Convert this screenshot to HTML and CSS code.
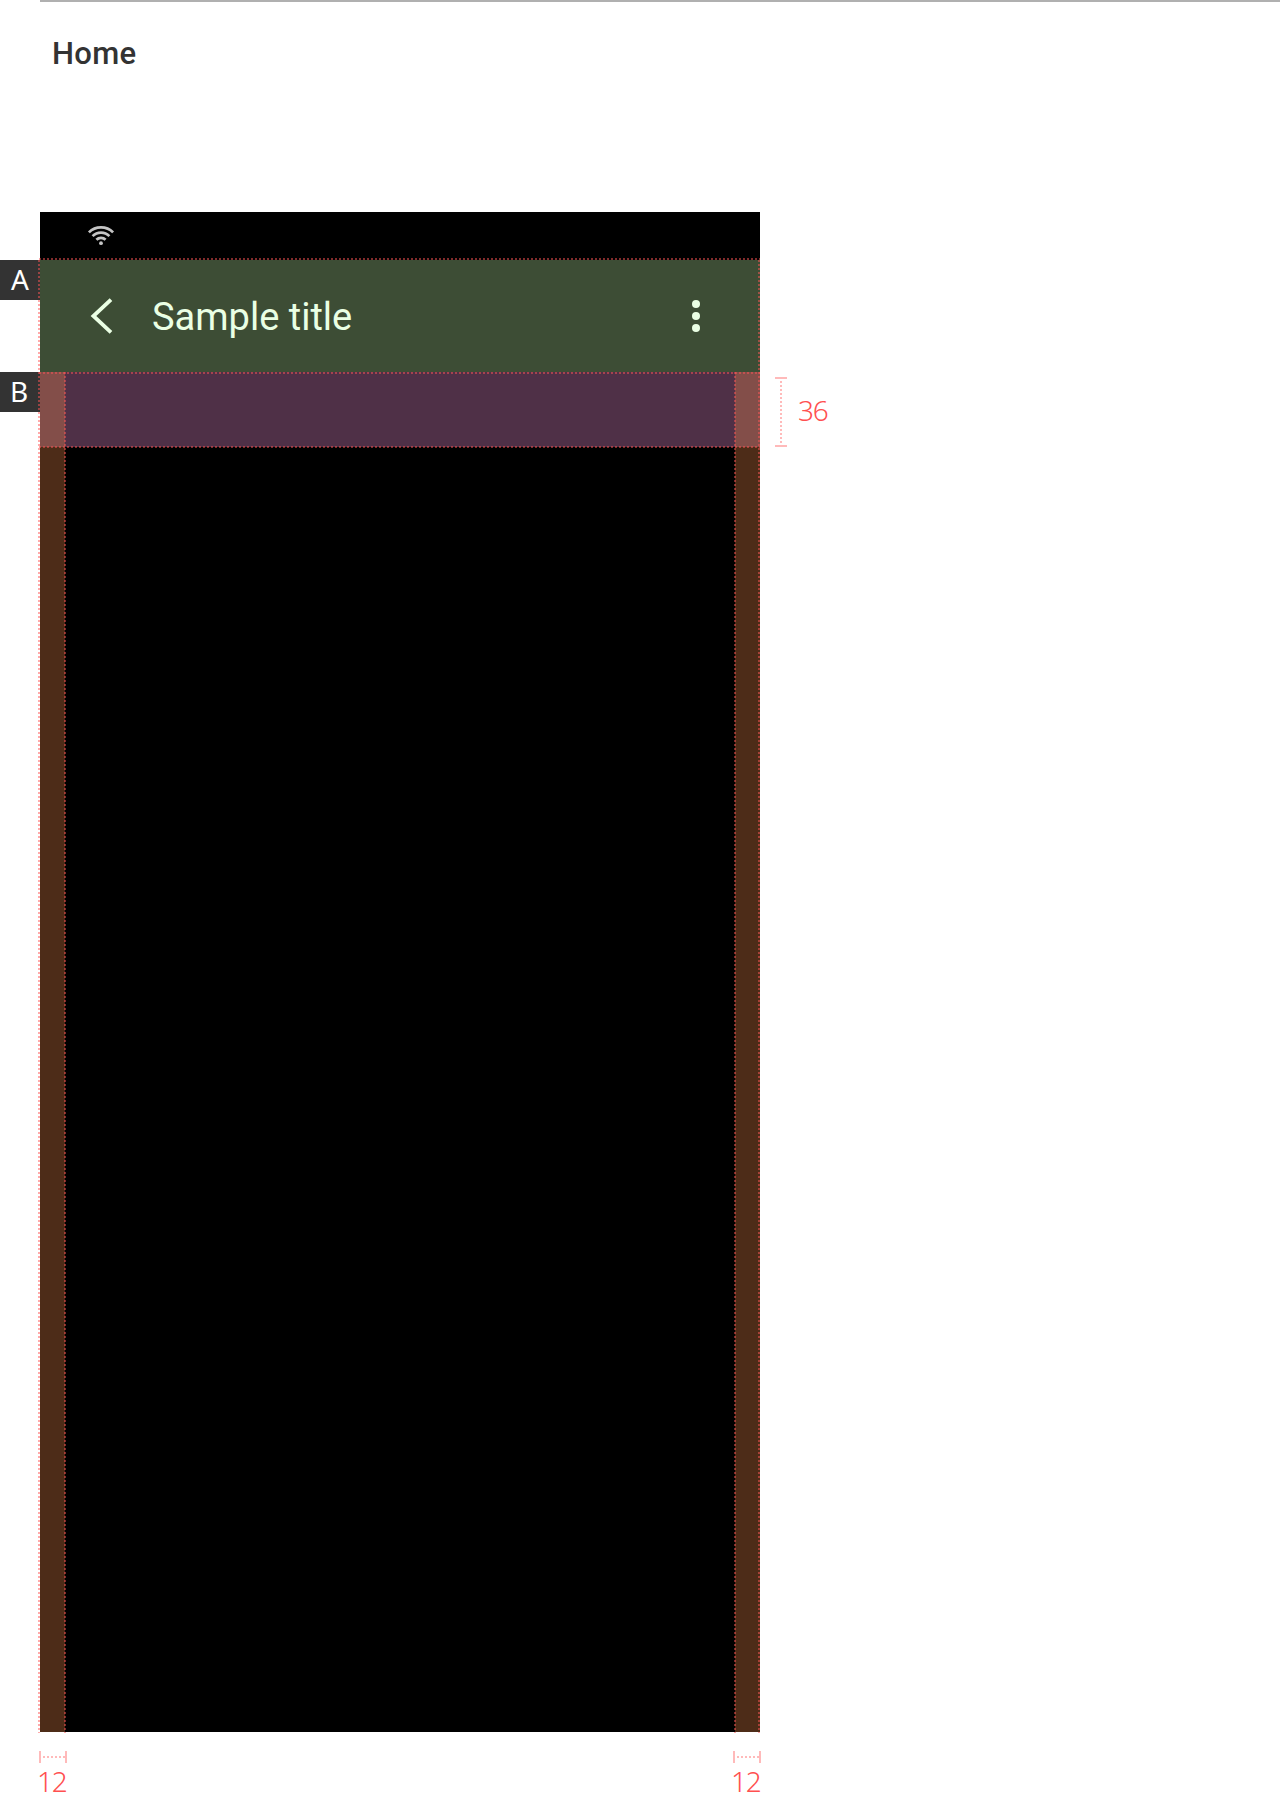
FILE: index.html
```
<!DOCTYPE html>
<html lang="en">
<head>
<meta charset="utf-8">
<title>Home</title>
<link rel="stylesheet" href="styles.css">
</head>
<body>
<header class="heading"><h1 class="heading-text">Home</h1></header>
<main class="spec">
  <div class="labels">
    <div class="tag tag-a">A</div>
    <div class="tag tag-b">B</div>
  </div>
  <div class="device">
    <div class="status">
      <svg class="wifi" width="28" height="22" viewBox="0 0 28 22" fill="none" stroke="#c4c4c4" stroke-width="2.7">
        <path d="M1.9 7.4a17 17 0 0 1 24.2 0M5.6 11.1a11.8 11.8 0 0 1 16.8 0M9.4 14.7a6.5 6.5 0 0 1 9.2 0"/>
        <circle cx="14" cy="18.2" r="1.9" fill="#c4c4c4" stroke="none"/>
      </svg>
    </div>
    <div class="appbar">
      <svg class="back" width="24" height="38" viewBox="0 0 24 38" fill="none" stroke="#eaffe4" stroke-width="3.8"><path d="M21 2.6L3.4 19L21 35.4"/></svg>
      <span class="title">Sample title</span>
      <svg class="more" width="8" height="32" viewBox="0 0 8 32" fill="#eaffe4"><circle cx="4" cy="4" r="4"/><circle cx="4" cy="16" r="4"/><circle cx="4" cy="28" r="4"/></svg>
    </div>
    <div class="band"><i class="margin"></i><i class="margin"></i></div>
    <div class="content"><i class="rail"></i><i class="rail"></i></div>
    <i class="guide-h guide-top"></i>
    <i class="guide-h guide-band-top"></i>
    <i class="guide-h guide-band-bottom"></i>
    <i class="guide-v guide-outer-left"></i>
    <i class="guide-v guide-inner guide-inner-left"></i>
    <i class="guide-v guide-inner guide-inner-right"></i>
    <i class="guide-v guide-outer-right"></i>
  </div>
  <div class="height-note">
    <i class="measure-v"></i>
    <span class="number">36</span>
  </div>
</main>
<footer class="widths">
  <div class="width-note"><i class="measure-h"></i><span class="number">12</span></div>
  <div class="width-note"><i class="measure-h"></i><span class="number">12</span></div>
</footer>
</body>
</html>
```
FILE: styles.css
```
* { box-sizing: border-box; }
body {
  margin: 0;
  height: 1800px;
  overflow: hidden;
  background: #fff;
  font-family: "Noto Sans", sans-serif;
}
i { display: block; }
.heading {
  height: 212px;
  margin-left: 40px;
  border-top: 2px solid #b0b0b0;
  padding: 32px 0 0 12px;
}
.heading-text {
  margin: 0;
  font: 500 31px/40px Roboto, sans-serif;
  letter-spacing: .3px;
  color: #333;
}
.spec { display: flex; height: 1520px; }
.labels { width: 40px; padding-top: 48px; }
.tag {
  height: 40px;
  padding-left: 11px;
  background: #333;
  color: #fff;
  font-size: 28px;
  line-height: 38px;
}
.tag-b { margin-top: 72px; padding-left: 10px; }
.device {
  position: relative;
  display: flex;
  flex-direction: column;
  width: 720px;
  background: #000;
}
.status { height: 48px; padding: 13px 0 0 47px; }
.wifi { display: block; }
.appbar {
  display: flex;
  align-items: center;
  height: 112px;
  padding: 0 60px 0 50px;
  background: #3d4d35;
}
.title {
  margin-left: 38px;
  padding-top: 2px;
  flex: 1;
  font: 400 38px/48px Roboto, sans-serif;
  color: #eaffe4;
}
.band {
  display: flex;
  justify-content: space-between;
  height: 75px;
  background: #4f3047;
}
.margin { width: 25px; background: #834e49; }
.content { display: flex; justify-content: space-between; flex: 1; }
.rail { width: 25px; background: #4d2c18; }

.guide-h, .guide-v { position: absolute; }
.guide-h {
  left: -1px;
  right: 0;
  height: 2px;
  background: repeating-linear-gradient(90deg, rgba(255, 85, 85, .5) 0 2px, transparent 2px 4px);
}
.guide-v {
  top: 48px;
  bottom: -1px;
  width: 2px;
  background: repeating-linear-gradient(rgba(255, 85, 85, .5) 0 2px, transparent 2px 4px);
}
.guide-top { top: 46px; }
.guide-band-top { top: 160px; }
.guide-band-bottom { top: 234px; }
.guide-inner { top: 160px; }
.guide-outer-left { left: -2px; }
.guide-inner-left { left: 24px; }
.guide-inner-right { right: 24px; }
.guide-outer-right { right: 0; }

.height-note {
  display: flex;
  align-items: flex-start;
  gap: 11px;
  height: 70px;
  margin: 165px 0 0 15px;
}
.height-note .number { margin-top: 14px; }
.measure-v {
  width: 12px;
  height: 70px;
  border: solid #ffbaba;
  border-width: 2px 0;
  background: repeating-linear-gradient(transparent 0 2px, #ffbaba 2px 4px) center / 2px 100% no-repeat;
}
.number {
  color: #ff5050;
  font-size: 28px;
  font-weight: 350;
  line-height: 38px;
  letter-spacing: -1.2px;
}
.widths {
  display: flex;
  justify-content: space-between;
  width: 722px;
  margin-left: 39px;
  padding-top: 19px;
}
.width-note { width: 28px; }
.width-note .number { display: block; margin: -1px 0 0 -2px; }
.measure-h {
  height: 12px;
  border: solid #ffbaba;
  border-width: 0 2px;
  background: repeating-linear-gradient(90deg, transparent 0 2px, #ffbaba 2px 4px) center / 100% 2px no-repeat;
}
```
